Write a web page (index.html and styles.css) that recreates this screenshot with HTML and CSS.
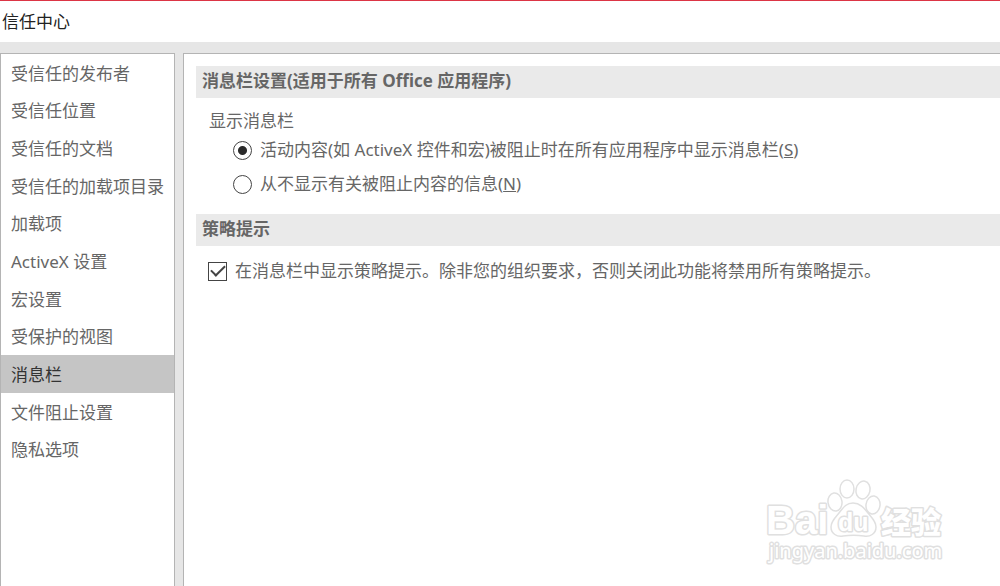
FILE: index.html
```html
<!DOCTYPE html>
<html lang="zh-CN">
<head>
<meta charset="utf-8">
<meta name="viewport" content="width=device-width, initial-scale=1">
<title>信任中心</title>
<link rel="stylesheet" href="styles.css">
</head>
<body>
<div class="dialog">
  <header class="titlebar"><h1 class="title">信任中心</h1></header>
  <div class="body">
    <nav class="sidebar">
      <ul class="menu">
        <li><a class="item" href="#">受信任的发布者</a></li>
        <li><a class="item" href="#">受信任位置</a></li>
        <li><a class="item" href="#">受信任的文档</a></li>
        <li><a class="item" href="#">受信任的加载项目录</a></li>
        <li><a class="item" href="#">加载项</a></li>
        <li><a class="item" href="#">ActiveX 设置</a></li>
        <li><a class="item" href="#">宏设置</a></li>
        <li><a class="item" href="#">受保护的视图</a></li>
        <li><a class="item selected" href="#" aria-current="page">消息栏</a></li>
        <li><a class="item" href="#">文件阻止设置</a></li>
        <li><a class="item" href="#">隐私选项</a></li>
      </ul>
    </nav>
    <main class="panel">
      <h2 class="section-title">消息栏设置(适用于所有 Office 应用程序)</h2>
      <fieldset class="group">
        <legend class="legend">显示消息栏</legend>
        <label class="option"><input class="radio" type="radio" name="bar" checked><span>活动内容(如 ActiveX 控件和宏)被阻止时在所有应用程序中显示消息栏(<u>S</u>)</span></label>
        <label class="option"><input class="radio" type="radio" name="bar"><span>从不显示有关被阻止内容的信息(<u>N</u>)</span></label>
      </fieldset>
      <h2 class="section-title">策略提示</h2>
      <label class="option policy"><input class="check" type="checkbox" checked><span>在消息栏中显示策略提示。除非您的组织要求，否则关闭此功能将禁用所有策略提示。</span></label>
    </main>
  </div>
  <svg class="watermark" viewBox="0 0 190 96" role="img" aria-label="Baidu 经验 jingyan.baidu.com">
    <text class="word" x="5" y="56">Bai</text>
    <g>
      <ellipse cx="74" cy="24" rx="7" ry="9" transform="rotate(-8 74 24)"/>
      <ellipse cx="86" cy="11" rx="7" ry="9"/>
      <ellipse cx="102" cy="12" rx="7" ry="9" transform="rotate(12 102 12)"/>
      <ellipse cx="112" cy="27" rx="7" ry="9" transform="rotate(8 112 27)"/>
      <path d="M92 25C85 25 82 30 78 35C74 40 70 43 70 49C70 56 76 59 82 58C89 57 96 57 103 58C109 59 115 56 115 49C115 43 111 40 107 35C103 30 99 25 92 25Z"/>
    </g>
    <text class="du" x="77" y="53">du</text>
    <text class="cn" x="120" y="55">经验</text>
    <text class="site" x="8" y="80">jingyan.baidu.com</text>
  </svg>
</div>
</body>
</html>
```
FILE: styles.css
```css
* { box-sizing: border-box; }

body {
  margin: 0;
  background: #fff;
  color: #666;
  font: 17px/24px "Noto Sans", "Noto Sans CJK SC", sans-serif;
}

.dialog {
  position: relative;
  display: flex;
  flex-direction: column;
  min-height: 100vh;
  border-top: 1px solid #dc3545;
  overflow: hidden;
}

.titlebar { padding: 9px 2px 8px; }

.title {
  margin: 0;
  color: #222;
  font-size: 17px;
  font-weight: 400;
  line-height: 24px;
}

.body {
  display: flex;
  flex: 1;
  gap: 8px;
  padding-top: 11px;
  background: #e6e6e6;
}

.sidebar {
  flex: 0 0 175px;
  border: 1px solid #b4b4b4;
  border-bottom: 0;
  background: #fff;
}

.menu {
  display: grid;
  grid-auto-rows: 1fr;
  min-height: 414px;
  margin: 0;
  padding: 0;
  list-style: none;
}

.item {
  display: flex;
  align-items: center;
  height: 100%;
  padding: 2px 0 0 10px;
  color: inherit;
  text-decoration: none;
  white-space: nowrap;
}

.selected {
  background: #c5c5c5;
  color: #333;
}

.panel {
  flex: 1;
  min-width: 0;
  padding: 12px 0 0 12px;
  border: solid #b4b4b4;
  border-width: 1px 0 0 1px;
  background: #fff;
}

.section-title {
  margin: 0;
  padding: 3px 6px 5px;
  background: #eaeaea;
  font-family: "Open Sans", "Noto Sans CJK SC", sans-serif;
  font-size: 17px;
  font-weight: 700;
  line-height: 24px;
}

.group {
  display: flex;
  flex-direction: column;
  gap: 10px;
  margin: 0;
  padding: 0 0 18px 37px;
  border: 0;
}

.legend {
  margin-left: -24px;
  padding: 11px 0 5px;
}

.option {
  display: flex;
  align-items: center;
  gap: 8px;
}

.policy { padding: 13px 0 0 12px; }

.radio,
.check {
  flex: none;
  width: 19px;
  height: 19px;
  margin: 0;
  border: 1px solid #444;
  background: #fff;
  appearance: none;
}

.radio { border-radius: 50%; }

.radio:checked { background: radial-gradient(circle, #2b2b2b 4px, #fff 5px); }

.check {
  display: grid;
  place-items: center;
}

.check:checked::before {
  content: "";
  width: 12px;
  height: 6px;
  margin-bottom: 4px;
  border: solid #444;
  border-width: 0 0 2px 2px;
  transform: rotate(-45deg);
}

.watermark {
  position: absolute;
  right: 49px;
  bottom: 12px;
  width: 190px;
  height: 96px;
  fill: #fff;
  stroke: #e0e0e0;
  stroke-width: 1.5;
}

.watermark text {
  paint-order: stroke;
  stroke-width: 3;
  stroke-linejoin: round;
}

.word { font: 700 40px "Liberation Sans", sans-serif; }
.du { font: 700 25px "Liberation Sans", sans-serif; }
.cn { font: 900 30px "Noto Sans CJK SC", sans-serif; }
.site { font: 400 20px "Noto Sans", sans-serif; }
```
